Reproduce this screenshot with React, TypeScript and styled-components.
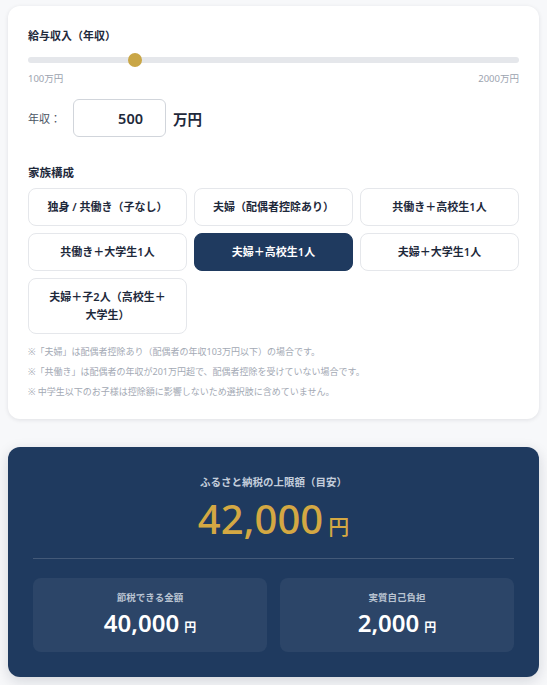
import styled, { createGlobalStyle } from 'styled-components';

const GlobalStyle = createGlobalStyle`
  body {
    margin: 0;
    background: #f7f8fa;
    font-family: "Noto Sans", "Noto Sans CJK JP", sans-serif;
    color: #1e293b;
  }
`

const Page = styled.div`
  display: flex;
  flex-direction: column;
  gap: 28px;
  padding: 6px 8px 20px 8px;
`

const Card = styled.div`
  background: #fff;
  border-radius: 12px;
  box-shadow: 0 1px 4px rgba(15, 23, 42, 0.1);
  padding: 20px 20px 17px;
`

const SectionTitle = styled.div`
  font-size: 11px;
  font-weight: 700;
  line-height: 20px;
  color: #1e293b;
`

const SliderWrap = styled.div`
  position: relative;
  height: 14px;
  margin-top: 7px;
  display: flex;
  align-items: center;
`

const Track = styled.div`
  width: 100%;
  height: 6px;
  border-radius: 3px;
  background: #e5e7eb;
`

const Thumb = styled.div`
  position: absolute;
  top: 0;
  width: 14px;
  height: 14px;
  border-radius: 50%;
  background: #c9a646;
`

const RangeLabels = styled.div`
  display: flex;
  justify-content: space-between;
  margin-top: 5px;
  font-size: 9.5px;
  line-height: 14px;
  color: #9ca3af;
`

const IncomeRow = styled.div`
  display: flex;
  align-items: center;
  margin-top: 13px;
`

const IncomeLabel = styled.span`
  font-size: 11px;
  color: #4b5563;
  width: 45px;
`

const IncomeBox = styled.div`
  box-sizing: border-box;
  width: 93px;
  height: 38px;
  border: 1px solid #d1d5db;
  border-radius: 6px;
  display: flex;
  align-items: center;
  justify-content: flex-end;
  padding-right: 22px;
  font-size: 14.5px;
  font-weight: 600;
  color: #1e293b;
`

const Unit = styled.span`
  margin-left: 7px;
  font-size: 14.5px;
  font-weight: 700;
  color: #1e293b;
`

const FamilyTitle = styled(SectionTitle)`
  margin-top: 26px;
  font-size: 11.5px;
`

const OptionGrid = styled.div`
  display: grid;
  grid-template-columns: repeat(3, 1fr);
  gap: 7px;
  margin-top: 5px;
`

const Option = styled.button<{ $active?: boolean }>`
  box-sizing: border-box;
  font-family: inherit;
  min-height: 38px;
  padding: 9px 17px;
  line-height: 18px;
  font-size: 11px;
  font-weight: 600;
  text-align: center;
  border-radius: 8px;
  border: 1px solid ${p => (p.$active ? '#1f3a5f' : '#e5e7eb')};
  background: ${p => (p.$active ? '#1f3a5f' : '#fff')};
  color: ${p => (p.$active ? '#fff' : '#1e293b')};
  cursor: pointer;
`

const Notes = styled.div`
  margin-top: 8px;
  font-size: 9px;
  line-height: 20px;
  color: #a3a9b4;
`

const ResultCard = styled.div`
  background: #1f3a5f;
  border-radius: 12px;
  box-shadow: 0 4px 14px rgba(15, 23, 42, 0.15);
  padding: 25px;
  text-align: center;
`

const ResultTitle = styled.div`
  font-size: 10.5px;
  font-weight: 700;
  line-height: 20px;
  color: #c3cddb;
`

const BigAmount = styled.div`
  margin-top: 3px;
  font-size: 40px;
  font-weight: 500;
  line-height: 48px;
  color: #d4a843;
`

const Yen = styled.span<{ $size: number }>`
  font-size: ${p => p.$size}px;
  line-height: 1;
  margin-left: 5px;
`

const Divider = styled.div`
  height: 1px;
  background: rgba(255, 255, 255, 0.16);
  margin-top: 15px;
`

const StatRow = styled.div`
  display: grid;
  grid-template-columns: 1fr 1fr;
  gap: 13px;
  margin-top: 19px;
`

const StatBox = styled.div`
  background: rgba(255, 255, 255, 0.06);
  border-radius: 8px;
  padding: 12px 10px 14px;
`

const StatLabel = styled.div`
  font-size: 9.5px;
  font-weight: 700;
  line-height: 16px;
  color: #b9c3d1;
`

const StatValue = styled.div`
  margin-top: 2px;
  font-size: 24px;
  font-weight: 600;
  line-height: 30px;
  color: #fff;
`

const options = [
  '独身 / 共働き（子なし）',
  '夫婦（配偶者控除あり）',
  '共働き＋高校生1人',
  '共働き＋大学生1人',
  '夫婦＋高校生1人',
  '夫婦＋大学生1人',
  '夫婦＋子2人（高校生＋大学生）',
];

const App = () => {
  const income = 500;
  const pct = (income - 100) / (2000 - 100);

  return (
    <>
      <GlobalStyle />
      <Page>
        <Card>
          <SectionTitle>給与収入（年収）</SectionTitle>
          <SliderWrap>
            <Track />
            <Thumb style={{ left: `calc((100% - 14px) * ${pct})` }} />
          </SliderWrap>
          <RangeLabels>
            <span>100万円</span>
            <span>2000万円</span>
          </RangeLabels>
          <IncomeRow>
            <IncomeLabel>年収：</IncomeLabel>
            <IncomeBox>{income}</IncomeBox>
            <Unit>万円</Unit>
          </IncomeRow>

          <FamilyTitle>家族構成</FamilyTitle>
          <OptionGrid>
            {options.map(o => (
              <Option key={o} $active={o === '夫婦＋高校生1人'}>{o}</Option>
            ))}
          </OptionGrid>
          <Notes>
            <div>※「夫婦」は配偶者控除あり（配偶者の年収103万円以下）の場合です。</div>
            <div>※「共働き」は配偶者の年収が201万円超で、配偶者控除を受けていない場合です。</div>
            <div>※ 中学生以下のお子様は控除額に影響しないため選択肢に含めていません。</div>
          </Notes>
        </Card>

        <ResultCard>
          <ResultTitle>ふるさと納税の上限額（目安）</ResultTitle>
          <BigAmount>42,000<Yen $size={21}>円</Yen></BigAmount>
          <Divider />
          <StatRow>
            <StatBox>
              <StatLabel>節税できる金額</StatLabel>
              <StatValue>40,000<Yen $size={12}>円</Yen></StatValue>
            </StatBox>
            <StatBox>
              <StatLabel>実質自己負担</StatLabel>
              <StatValue>2,000<Yen $size={12}>円</Yen></StatValue>
            </StatBox>
          </StatRow>
        </ResultCard>
      </Page>
    </>
  );
}

export default App;
